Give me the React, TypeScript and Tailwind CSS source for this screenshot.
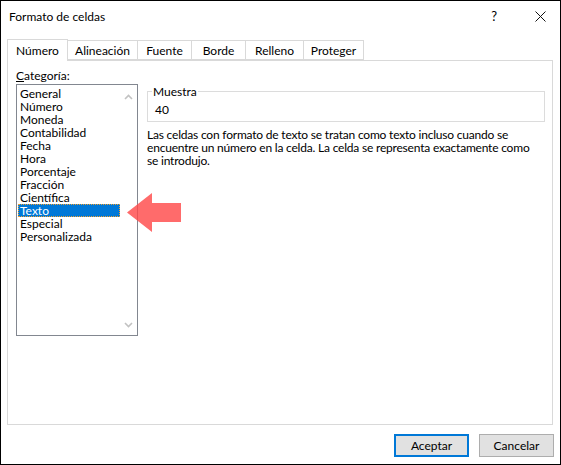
import React from 'react';

const categories = [
  'General', 'Número', 'Moneda', 'Contabilidad', 'Fecha', 'Hora',
  'Porcentaje', 'Fracción', 'Científica', 'Texto', 'Especial', 'Personalizada',
];

const tabs = [
  { label: 'Número', w: 'w-[61px]' },
  { label: 'Alineación', w: 'w-[70px]' },
  { label: 'Fuente', w: 'w-[54px]' },
  { label: 'Borde', w: 'w-[54px]' },
  { label: 'Relleno', w: 'w-[58px]' },
  { label: 'Proteger', w: 'w-[60px]' },
];

const Chevron = ({ up }: { up?: boolean }) => (
  <svg width="9" height="6" viewBox="0 0 9 6">
    <path d={up ? 'M1 5 L4.5 1.5 L8 5' : 'M1 1 L4.5 4.5 L8 1'} fill="none" stroke="#c2c2c2" strokeWidth="1.6" />
  </svg>
);

export default function App() {
  return (
    <div className="relative w-[561px] h-[465px] bg-white border border-black flex flex-col text-[12px] leading-[13px] text-black font-['Lato',sans-serif]">
      {/* Title bar */}
      <div className="h-[30px] flex items-center pl-[8px]">
        <span className="text-[12px]">Formato de celdas</span>
        <span className="ml-auto mr-[38px] text-[13px]">?</span>
        <svg width="11" height="11" viewBox="0 0 11 11" className="mr-[14px]">
          <path d="M0.5 0.5 L10.5 10.5 M10.5 0.5 L0.5 10.5" stroke="#111" strokeWidth="1" />
        </svg>
      </div>

      {/* Tabs */}
      <div className="flex items-end pl-[6px] h-[29px]">
        {tabs.map((t, i) =>
          i === 0 ? (
            <div key={t.label} className={`${t.w} h-[22px] border border-b-0 border-[#d9d9d9] bg-white flex items-center justify-center -mb-px relative z-10`}>
              {t.label}
            </div>
          ) : (
            <div key={t.label} className={`${t.w} h-[20px] border border-l-0 border-[#d9d9d9] bg-white flex items-center justify-center`}>
              {t.label}
            </div>
          ),
        )}
      </div>

      {/* Panel */}
      <div className="ml-[6px] w-[546px] h-[365px] border border-[#d9d9d9] flex pl-[8px] pt-[8px] gap-[9px]">
        <div className="flex flex-col">
          <div className="h-[14px]">
            <span className="underline">C</span>ategoría:
          </div>
          <div className="mt-[1px] w-[122px] h-[252px] border border-[#828790] flex">
            <div className="flex-1 flex flex-col pt-[2px] pl-[1px]">
              {categories.map((c) =>
                c === 'Texto' ? (
                  <div key={c} className="h-[13px] pl-[2px] bg-[#0078d7] text-white outline outline-1 outline-dotted outline-[#f0a030] -outline-offset-1">
                    {c}
                  </div>
                ) : (
                  <div key={c} className="h-[13px] pl-[2px]">
                    {c}
                  </div>
                ),
              )}
            </div>
            <div className="w-[17px] flex flex-col items-center justify-between pt-[9px] pb-[7px]">
              <Chevron up />
              <Chevron />
            </div>
          </div>
        </div>

        <div className="flex flex-col pt-[22px] w-[398px]">
          <div className="relative border border-[#dcdcdc] h-[31px] pl-[7px] flex items-center pt-[6px]">
            <span className="absolute -top-[7px] left-[4px] bg-white pl-[1px] pr-[1px]">Muestra</span>
            <span>40</span>
          </div>
          <p className="mt-[6px] pr-[4px] tracking-[-0.2px]">
            Las celdas con formato de texto se tratan como texto incluso cuando se encuentre un número en la celda. La celda se representa exactamente como se introdujo.
          </p>
        </div>
      </div>

      {/* Buttons */}
      <div className="flex justify-end gap-[10px] pr-[6px] pt-[9px]">
        <button className="w-[75px] h-[23px] bg-[#e1e1e1] border-2 border-[#0078d7] flex items-center justify-center">
          Aceptar
        </button>
        <button className="w-[75px] h-[23px] bg-[#e1e1e1] border border-[#adadad] flex items-center justify-center">
          Cancelar
        </button>
      </div>

      {/* Red arrow annotation */}
      <svg className="absolute left-[126px] top-[192px]" width="55" height="40" viewBox="0 0 55 40">
        <polygon points="0,19.5 25,0 25,10 54,10 54,29 25,29 25,39" fill="#ff4a4a" fillOpacity="0.82" />
      </svg>
    </div>
  );
}
